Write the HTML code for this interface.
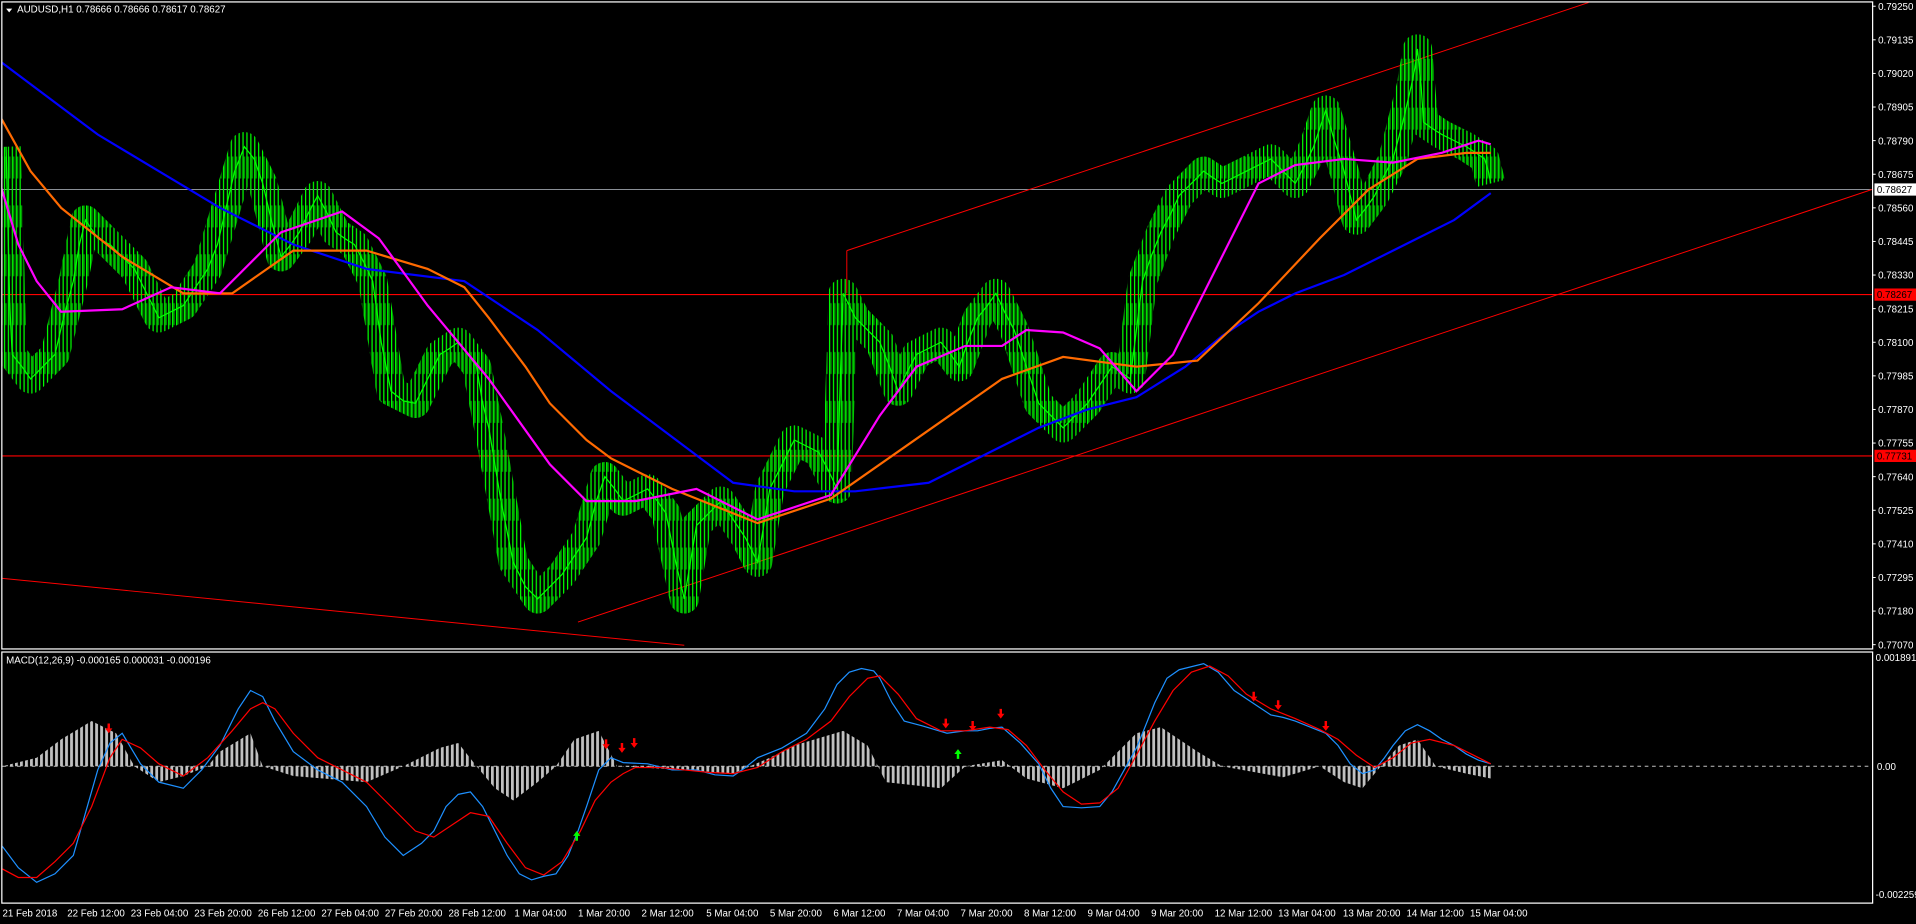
<!DOCTYPE html>
<html><head><meta charset="utf-8"><style>
html,body{margin:0;padding:0;background:#000;width:1916px;height:924px;overflow:hidden}
svg{display:block}
text{font-family:"Liberation Sans",sans-serif;font-size:8px;fill:#fff}
</style></head><body>
<svg width="1916" height="924" viewBox="0 0 1568 756" xmlns="http://www.w3.org/2000/svg">
<defs>
<pattern id="hs" width="4.1" height="10" patternUnits="userSpaceOnUse"><rect x="0" y="0" width="2.3" height="10" fill="#c0c0c0"/></pattern>
<pattern id="cs" width="3.2" height="40" patternUnits="userSpaceOnUse"><rect x="0" y="0" width="1" height="40" fill="#00ff00"/><rect x="1" y="8" width="1.2" height="18" fill="#00ff00" fill-opacity="0.6"/></pattern>
<clipPath id="mc"><rect x="2" y="2" width="1530" height="529"/></clipPath>
<clipPath id="dc"><rect x="2" y="534" width="1530" height="205"/></clipPath>
</defs>
<rect width="1568" height="756" fill="#000"/>
<rect x="1.5" y="1.5" width="1531" height="529.5" fill="none" stroke="#fff" stroke-width="1"/>
<rect x="1.5" y="533.5" width="1531" height="205.5" fill="none" stroke="#fff" stroke-width="1"/>
<g clip-path="url(#mc)">
<line x1="2" y1="155" x2="1532" y2="155" stroke="#8a8f96" stroke-width="0.9"/>
<line x1="2" y1="241" x2="1532" y2="241" stroke="#f00" stroke-width="0.9"/>
<line x1="2" y1="373" x2="1532" y2="373" stroke="#f00" stroke-width="0.9"/>
<line x1="693" y1="205" x2="1300" y2="2" stroke="#f00" stroke-width="0.8"/>
<line x1="693" y1="205" x2="693" y2="240" stroke="#f00" stroke-width="0.8"/>
<line x1="473" y1="509" x2="1532" y2="155" stroke="#f00" stroke-width="0.8"/>
<line x1="0" y1="473" x2="560" y2="528" stroke="#f00" stroke-width="0.8"/>
<polyline fill="none" stroke="url(#cs)" stroke-width="24" stroke-linejoin="round" points="5,120 10,290 25,310 45,290 60,230 70,180 90,200 110,220 130,260 150,250 170,220 185,170 200,120 215,150 230,210 245,190 260,160 275,190 290,200 305,230 320,320 340,330 360,290 375,280 390,300 400,350 420,460 440,490 460,470 480,440 495,390 510,410 530,400 545,420 560,490 570,430 590,410 610,440 620,460 630,400 650,360 670,370 685,400 690,240 700,260 720,280 735,320 750,290 770,280 785,300 800,260 815,240 830,270 850,330 870,350 890,330 910,300 925,310 935,230 950,190 965,160 985,140 1000,150 1020,140 1040,130 1060,150 1075,120 1085,90 1100,140 1110,180 1125,160 1140,130 1155,70 1160,40 1165,100 1180,110 1200,120 1215,130 1220,150"/>
<polyline fill="none" stroke="#00ff00" stroke-width="1" points="5,120 8,250 10,290 18,300 25,310 35,300 45,290 52,260 60,230 65,200 70,180 80,195 90,200 100,210 110,220 120,240 130,260 140,255 150,250 160,235 170,220 178,200 185,170 192,140 200,120 208,130 215,150 222,180 230,210 238,200 245,190 252,175 260,160 268,175 275,190 282,195 290,200 298,215 305,230 312,280 320,320 330,328 340,330 350,310 360,290 368,285 375,280 383,290 390,300 395,330 400,350 410,410 420,460 430,480 440,490 450,480 460,470 470,455 480,440 488,410 495,390 503,400 510,410 520,405 530,400 538,410 545,420 553,460 560,490 565,460 570,430 580,420 590,410 600,425 610,440 615,450 620,460 625,430 630,400 640,380 650,360 660,365 670,370 678,385 685,400 688,300 690,240 695,250 700,260 710,270 720,280 728,300 735,320 742,305 750,290 760,285 770,280 778,290 785,300 792,280 800,260 808,250 815,240 822,255 830,270 840,300 850,330 860,340 870,350 880,340 890,330 900,315 910,300 918,305 925,310 930,270 935,230 942,210 950,190 958,175 965,160 975,150 985,140 992,145 1000,150 1010,145 1020,140 1030,135 1040,130 1050,140 1060,150 1068,135 1075,120 1080,105 1085,90 1092,115 1100,140 1105,160 1110,180 1118,170 1125,160 1132,145 1140,130 1148,100 1155,70 1158,55 1160,40 1163,70 1165,100 1172,105 1180,110 1190,115 1200,120 1208,125 1215,130 1218,140 1220,150"/>
<polyline fill="none" stroke="#0000ff" stroke-width="1.8" points="0,50 40,80 80,110 130,140 180,170 240,200 300,220 380,230 440,270 500,320 560,365 600,395 650,402 700,402 760,395 800,375 850,350 890,335 930,325 970,300 1000,275 1030,255 1060,240 1100,225 1150,200 1190,180 1220,158"/>
<polyline fill="none" stroke="#ff6a00" stroke-width="1.8" points="0,95 25,140 50,170 100,210 150,240 190,240 240,205 300,205 350,220 380,235 400,260 430,300 450,330 480,360 500,375 550,400 620,428 680,408 720,380 770,345 820,310 870,292 930,300 980,295 1030,248 1080,195 1120,155 1160,130 1200,125 1220,125"/>
<polyline fill="none" stroke="#ff00ff" stroke-width="1.8" points="0,150 15,200 30,230 50,255 100,253 140,235 180,240 230,190 280,173 310,195 350,250 400,310 450,380 480,410 520,410 570,400 620,425 680,405 720,340 750,300 790,283 820,283 840,270 870,272 900,285 930,320 960,290 990,230 1030,150 1060,135 1100,130 1140,133 1180,125 1210,115 1220,118"/>
</g>
<g clip-path="url(#dc)">
<line x1="2" y1="627" x2="1532" y2="627" stroke="#c0c0c0" stroke-width="0.8" stroke-dasharray="3,3"/>
<polygon fill="url(#hs)" points="2,627 30,620 50,605 75,590 95,600 110,627 130,640 150,635 170,627 180,615 205,600 215,627 240,635 300,640 330,627 360,612 375,608 390,627 405,645 420,655 440,640 455,627 470,605 490,598 505,627 560,630 600,633 630,620 650,610 690,598 710,610 725,640 770,645 790,627 820,622 840,637 870,645 900,630 930,600 950,595 980,615 1000,627 1050,636 1080,627 1100,640 1115,645 1130,627 1145,610 1160,605 1175,627 1200,633 1220,637 1220,627"/>
<polyline fill="none" stroke="#1e90ff" stroke-width="1" points="0,690 15,710 30,722 45,715 60,700 70,665 80,630 90,608 100,600 115,625 130,640 150,645 165,630 180,610 195,580 205,565 215,570 225,590 240,615 260,630 280,640 300,660 315,685 330,700 345,690 355,680 365,660 375,650 385,648 395,660 405,680 415,700 425,715 435,720 445,717 455,715 465,700 473,680 480,660 490,630 500,620 510,624 530,625 550,630 570,630 585,634 600,635 610,628 620,620 640,612 660,600 675,580 685,560 695,550 705,547 715,549 720,555 730,575 740,590 755,594 775,600 790,598 800,598 810,596 820,595 835,608 850,625 860,645 870,660 885,661 900,660 910,648 920,630 930,612 935,600 945,575 955,555 965,548 985,543 997,550 1010,565 1025,575 1040,585 1050,587 1060,590 1075,596 1085,600 1095,610 1105,625 1115,633 1125,630 1133,620 1140,610 1150,598 1160,593 1170,598 1180,605 1190,610 1200,617 1210,622 1220,625"/>
<polyline fill="none" stroke="#ff0000" stroke-width="1" points="0,710 15,718 30,718 45,705 60,690 75,660 90,620 100,605 115,612 130,625 150,635 170,620 190,598 205,580 215,575 225,580 240,600 260,620 280,630 300,640 320,660 340,680 355,685 370,675 385,665 400,668 415,690 430,710 445,716 460,705 475,680 487,655 500,640 510,633 520,628 540,628 560,630 580,632 600,633 620,628 640,615 660,605 680,590 695,570 710,555 720,553 735,568 750,588 770,598 790,598 810,595 825,597 840,610 855,630 870,648 885,658 900,657 915,645 930,618 945,590 960,565 975,550 990,545 1005,553 1020,568 1040,580 1060,588 1080,597 1095,605 1110,618 1125,628 1140,620 1155,608 1170,605 1190,610 1210,620 1220,625"/>
</g>
<g fill="#f00">
<path d="M88,592h2v4h2l-3,4l-3,-4h2z"/>
<path d="M495,605h2v4h2l-3,4l-3,-4h2z"/>
<path d="M508,608h2v4h2l-3,4l-3,-4h2z"/>
<path d="M518,604h2v4h2l-3,4l-3,-4h2z"/>
<path d="M773,588h2v4h2l-3,4l-3,-4h2z"/>
<path d="M795,590h2v4h2l-3,4l-3,-4h2z"/>
<path d="M818,580h2v4h2l-3,4l-3,-4h2z"/>
<path d="M1025,566h2v4h2l-3,4l-3,-4h2z"/>
<path d="M1045,573h2v4h2l-3,4l-3,-4h2z"/>
<path d="M1084,590h2v4h2l-3,4l-3,-4h2z"/>
</g>
<g fill="#0f0">
<path d="M471,688h2v-4h2l-3,-4l-3,4h2z"/>
<path d="M783,621h2v-4h2l-3,-4l-3,4h2z"/>
</g>
<path d="M5,7h5l-2.5,3z" fill="#fff"/>
<text x="14" y="10">AUDUSD,H1  0.78666 0.78666 0.78617 0.78627</text>
<text x="5" y="543">MACD(12,26,9) -0.000165 0.000031 -0.000196</text>
<g font-size="7.8">
<text x="1537" y="8">0.79250</text>
<text x="1537" y="35.5">0.79135</text>
<text x="1537" y="63">0.79020</text>
<text x="1537" y="90.5">0.78905</text>
<text x="1537" y="118">0.78790</text>
<text x="1537" y="145.5">0.78675</text>
<text x="1537" y="173">0.78560</text>
<text x="1537" y="200.5">0.78445</text>
<text x="1537" y="228">0.78330</text>
<text x="1537" y="255.5">0.78215</text>
<text x="1537" y="283">0.78100</text>
<text x="1537" y="310.5">0.77985</text>
<text x="1537" y="338">0.77870</text>
<text x="1537" y="365.5">0.77755</text>
<text x="1537" y="393">0.77640</text>
<text x="1537" y="420.5">0.77525</text>
<text x="1537" y="448">0.77410</text>
<text x="1537" y="475.5">0.77295</text>
<text x="1537" y="503">0.77180</text>
<text x="1537" y="530.5">0.77070</text>
<rect x="1534" y="150" width="34" height="10" fill="#fff"/>
<text x="1536" y="158" style="fill:#000">0.78627</text>
<rect x="1534" y="236" width="34" height="10" fill="#f00"/>
<text x="1536" y="244" style="fill:#000">0.78267</text>
<rect x="1534" y="368" width="34" height="10" fill="#f00"/>
<text x="1536" y="376" style="fill:#000">0.77731</text>
<text x="1535" y="541">0.001891</text>
<text x="1536" y="630">0.00</text>
<text x="1535" y="735">-0.002259</text>
</g>
<g stroke="#fff" stroke-width="0.8">
<line x1="1532" y1="5" x2="1535" y2="5"/><line x1="1532" y1="32.5" x2="1535" y2="32.5"/><line x1="1532" y1="60" x2="1535" y2="60"/><line x1="1532" y1="87.5" x2="1535" y2="87.5"/><line x1="1532" y1="115" x2="1535" y2="115"/><line x1="1532" y1="142.5" x2="1535" y2="142.5"/><line x1="1532" y1="170" x2="1535" y2="170"/><line x1="1532" y1="197.5" x2="1535" y2="197.5"/><line x1="1532" y1="225" x2="1535" y2="225"/><line x1="1532" y1="252.5" x2="1535" y2="252.5"/><line x1="1532" y1="280" x2="1535" y2="280"/><line x1="1532" y1="307.5" x2="1535" y2="307.5"/><line x1="1532" y1="335" x2="1535" y2="335"/><line x1="1532" y1="362.5" x2="1535" y2="362.5"/><line x1="1532" y1="390" x2="1535" y2="390"/><line x1="1532" y1="417.5" x2="1535" y2="417.5"/><line x1="1532" y1="445" x2="1535" y2="445"/><line x1="1532" y1="472.5" x2="1535" y2="472.5"/><line x1="1532" y1="500" x2="1535" y2="500"/><line x1="1532" y1="527.5" x2="1535" y2="527.5"/>
</g>
<g font-size="7.6">
<text x="2" y="750">21 Feb 2018</text>
<text x="55" y="750">22 Feb 12:00</text>
<text x="107" y="750">23 Feb 04:00</text>
<text x="159" y="750">23 Feb 20:00</text>
<text x="211" y="750">26 Feb 12:00</text>
<text x="263" y="750">27 Feb 04:00</text>
<text x="315" y="750">27 Feb 20:00</text>
<text x="367" y="750">28 Feb 12:00</text>
<text x="421" y="750">1 Mar 04:00</text>
<text x="473" y="750">1 Mar 20:00</text>
<text x="525" y="750">2 Mar 12:00</text>
<text x="578" y="750">5 Mar 04:00</text>
<text x="630" y="750">5 Mar 20:00</text>
<text x="682" y="750">6 Mar 12:00</text>
<text x="734" y="750">7 Mar 04:00</text>
<text x="786" y="750">7 Mar 20:00</text>
<text x="838" y="750">8 Mar 12:00</text>
<text x="890" y="750">9 Mar 04:00</text>
<text x="942" y="750">9 Mar 20:00</text>
<text x="994" y="750">12 Mar 12:00</text>
<text x="1046" y="750">13 Mar 04:00</text>
<text x="1099" y="750">13 Mar 20:00</text>
<text x="1151" y="750">14 Mar 12:00</text>
<text x="1203" y="750">15 Mar 04:00</text>
</g>
</svg>
</body></html>
